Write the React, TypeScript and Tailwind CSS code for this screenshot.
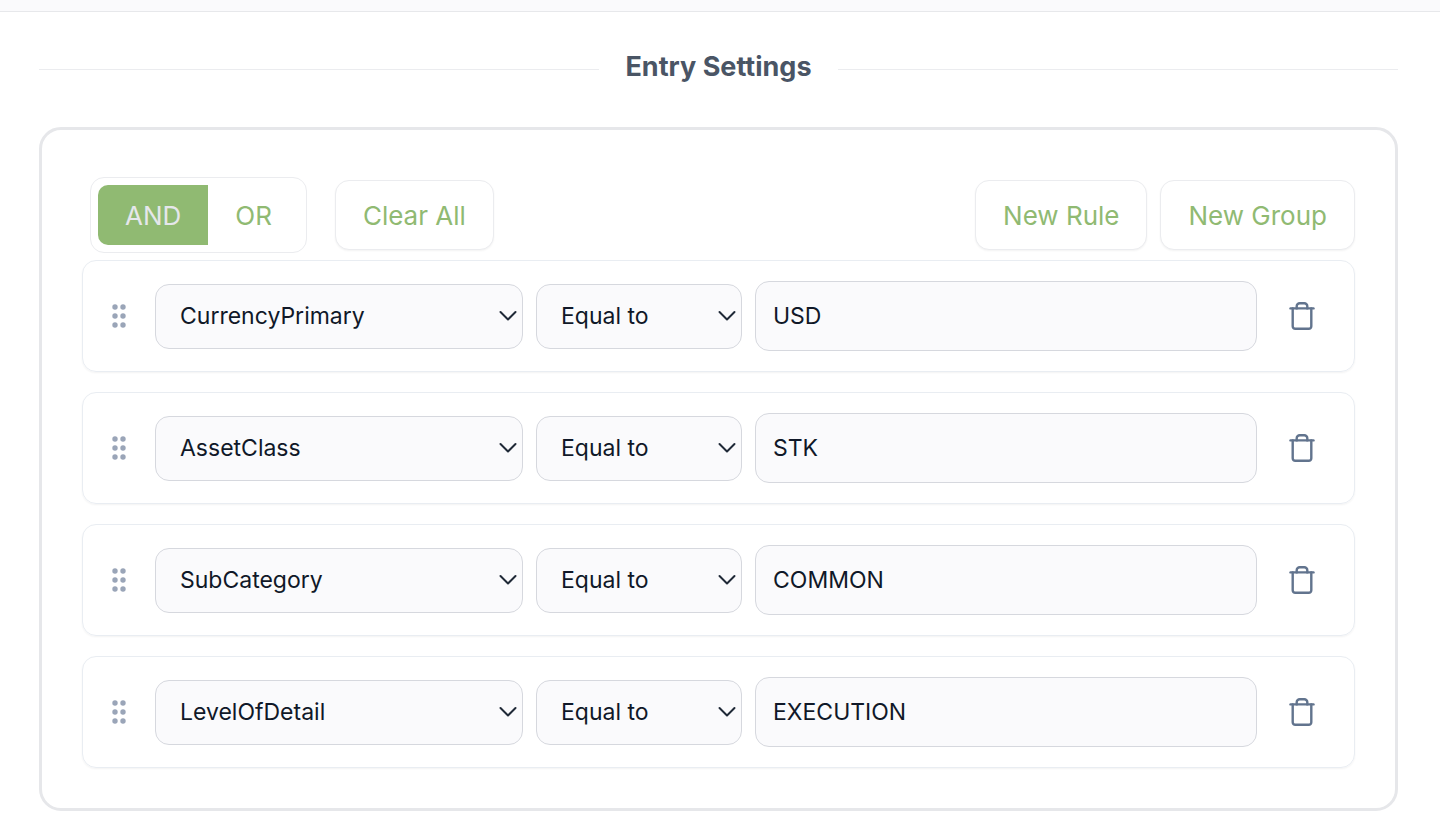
import React, { useState } from 'react';

interface Rule {
  id: number;
  field: string;
  operator: string;
  value: string;
}

const FIELDS = ['CurrencyPrimary', 'AssetClass', 'SubCategory', 'LevelOfDetail'];
const OPERATORS = ['Equal to', 'Not equal to', 'Contains'];

const INITIAL_RULES: Rule[] = [
  { id: 1, field: 'CurrencyPrimary', operator: 'Equal to', value: 'USD' },
  { id: 2, field: 'AssetClass', operator: 'Equal to', value: 'STK' },
  { id: 3, field: 'SubCategory', operator: 'Equal to', value: 'COMMON' },
  { id: 4, field: 'LevelOfDetail', operator: 'Equal to', value: 'EXECUTION' },
];

const DragHandle = () => (
  <svg width="14" height="24" viewBox="0 0 14 24" className="fill-[#9aa5b8]" aria-hidden="true">
    {[3, 12, 21].map(y => (
      <React.Fragment key={y}>
        <circle cx="3" cy={y} r="2.7" />
        <circle cx="11" cy={y} r="2.7" />
      </React.Fragment>
    ))}
  </svg>
);

const TrashIcon = () => (
  <svg width="26" height="28" viewBox="0 0 26 28" fill="none" stroke="currentColor" strokeWidth="2.4" strokeLinecap="round" strokeLinejoin="round" aria-hidden="true">
    <path d="M1.500 6.400h23" />
    <path d="M7.700 6.400V4.200a3 3 0 0 1 3-3h4.600a3 3 0 0 1 3 3v2.200" />
    <path d="M3.700 6.400v17.900a2.500 2.500 0 0 0 2.500 2.500h13.600a2.500 2.500 0 0 0 2.500-2.500V6.400" />
  </svg>
);

interface SelectProps {
  label: string;
  value: string;
  options: string[];
  className: string;
  onChange: (value: string) => void;
}

const Select: React.FC<SelectProps> = ({ label, value, options, className, onChange }) => (
  <div className={`relative shrink-0 ${className}`}>
    <select
      aria-label={label}
      value={value}
      onChange={(e) => onChange(e.target.value)}
      className="w-full h-[65px] pl-6 pr-8 appearance-none rounded-[14px] border border-[#d6d8de] bg-[#fafafc] text-[23px] text-gray-900"
    >
      {options.map(o => <option key={o} value={o}>{o}</option>)}
    </select>
    <svg width="18" height="11" viewBox="0 0 18 11" className="absolute right-1.5 top-1/2 -translate-y-1/2 pointer-events-none" fill="none" stroke="#1f2937" strokeWidth="2" strokeLinecap="round" strokeLinejoin="round" aria-hidden="true">
      <path d="M1.500 1.500 9 9l7.500-7.500" />
    </svg>
  </div>
);

const BUTTON = 'h-[70px] px-[27px] rounded-[14px] border border-[#ebecef] bg-white shadow-xs text-[26px] text-[#90ba72]';

export default function App() {
  const [rules, setRules] = useState<Rule[]>(INITIAL_RULES);
  const [combinator, setCombinator] = useState<'AND' | 'OR'>('AND');

  const updateRule = (id: number, patch: Partial<Rule>) => {
    setRules(rules.map(r => (r.id === id ? { ...r, ...patch } : r)));
  };

  const addRule = () => {
    setRules([...rules, { id: Date.now(), field: FIELDS[0], operator: OPERATORS[0], value: '' }]);
  };

  return (
    <div className="bg-white font-['Inter',sans-serif]">
      <div className="h-3 border-b border-[#e7e8eb] bg-[#fafafc]" />

      <main className="pl-[39px] pr-[42px] pt-9 pb-5">
        {/* Section title */}
        <div className="flex items-center gap-[26px]">
          <div className="flex-1 h-px bg-[#ebecef]" />
          <h2 className="pb-1 text-[27px] leading-[38px] font-bold text-gray-600">Entry Settings</h2>
          <div className="flex-1 h-px bg-[#ebecef]" />
        </div>

        <section className="mt-[37px] px-10 pt-[47px] pb-10 rounded-[22px] border-3 border-[#e6e7ea]">
          {/* Toolbar */}
          <div className="flex items-center justify-between pl-2 mb-[7px]">
            <div className="flex items-center gap-7">
              <div className="flex h-[76px] p-[7px] rounded-[14px] border border-[#ebecef] text-[26px]">
                {(['AND', 'OR'] as const).map(c => (
                  <button
                    key={c}
                    onClick={() => setCombinator(c)}
                    className={`px-[27px] first:rounded-l-[10px] last:rounded-r-[10px] ${combinator === c ? 'bg-[#90ba72] text-[#e5e7eb]' : 'text-[#90ba72]'}`}
                  >
                    {c}
                  </button>
                ))}
              </div>
              <button onClick={() => setRules([])} className={BUTTON}>Clear All</button>
            </div>
            <div className="flex items-center gap-[13px]">
              <button onClick={addRule} className={BUTTON}>New Rule</button>
              <button className={BUTTON}>New Group</button>
            </div>
          </div>

          {/* Rules */}
          <div className="flex flex-col gap-5">
            {rules.map(rule => (
              <div key={rule.id} className="flex items-center gap-[13px] p-5 rounded-[14px] border border-[#e9edf2] shadow-xs">
                <div className="flex justify-center w-8 mr-[7px] shrink-0 cursor-grab">
                  <DragHandle />
                </div>
                <Select
                  label="Field"
                  value={rule.field}
                  options={FIELDS}
                  className="w-92"
                  onChange={(field) => updateRule(rule.id, { field })}
                />
                <Select
                  label="Operator"
                  value={rule.operator}
                  options={OPERATORS}
                  className="w-[206px]"
                  onChange={(operator) => updateRule(rule.id, { operator })}
                />
                <input
                  type="text"
                  aria-label="Value"
                  value={rule.value}
                  onChange={(e) => updateRule(rule.id, { value: e.target.value })}
                  className="flex-1 min-w-0 h-[70px] px-[17px] rounded-[14px] border border-[#d6d8de] bg-[#fafafc] text-[23px] text-gray-900"
                />
                <button
                  aria-label="Delete rule"
                  onClick={() => setRules(rules.filter(r => r.id !== rule.id))}
                  className="flex justify-center w-16 shrink-0 text-slate-500"
                >
                  <TrashIcon />
                </button>
              </div>
            ))}
          </div>
        </section>
      </main>
    </div>
  );
}
